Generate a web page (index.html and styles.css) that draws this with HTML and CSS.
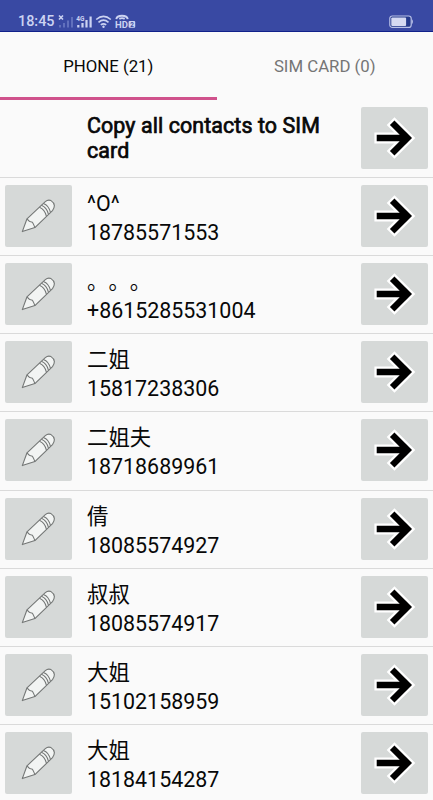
FILE: index.html
```html
<!DOCTYPE html>
<html lang="en">
<head>
    <meta charset="UTF-8">
    <meta name="viewport" content="width=device-width, initial-scale=1.0">
    <title>Contacts</title>
    <link rel="stylesheet" href="styles.css">
</head>
<body>
    <svg class="icons">
        <symbol id="pencil" viewBox="0 0 67 62">
            <path d="M17.3 46.6 L22 33.8 L40.3 16.6 Q43 14.3 46 15.6 Q49 17.4 49.4 20.6 Q49.3 23.4 47.5 25.6 L29.9 42.6 Z" fill="#f2f4f3" stroke="#747776" stroke-width="1.1" stroke-linejoin="round"/>
            <path d="M22 33.8 Q24 37 27.4 37.2 Q28.6 39 29.9 42.6 M34.4 22.2 Q39.8 24.2 41.5 31.4 M36.4 20.3 Q41.8 22.3 43.5 29.4 M38.4 18.4 Q43.8 20.3 45.5 27.5" fill="none" stroke="#747776" stroke-width="1.1"/>
        </symbol>
        <symbol id="arrow" viewBox="0 0 67 62">
            <path d="M13.4 31 H46 M29.6 14.1 L46.5 31 L29.6 47.9" fill="none" stroke="#fff" stroke-width="11"/>
            <path d="M15.7 31 H46 M31.2 15.7 L46.5 31 L31.2 46.3" fill="none" stroke="#000" stroke-width="6.4"/>
        </symbol>
    </svg>

    <div class="status">
        <span class="time">18:45</span>
        <svg class="signals" width="80" height="16" viewBox="0 0 80 16" fill="none" stroke="#ccd3f2">
            <!-- sim 1, no service -->
            <path d="M2 1.5 L6 5.5 M6 1.5 L2 5.5" stroke-width="1.6"/>
            <path d="M3 13.5 V11 M7 13.5 V9 M11 13.5 V6.5 M15 13.5 V3" stroke="#6170bd" stroke-width="2"/>
            <!-- sim 2, 4G -->
            <text x="19.2" y="6.6" font-size="6.5" font-weight="700" fill="#ccd3f2" stroke="none">4G</text>
            <path d="M21.3 13.5 V11 M25.5 13.5 V9 M29.5 13.5 V6 M33.6 13.5 V2.5" stroke-width="2.2"/>
            <!-- wifi -->
            <path d="M39.2 5.5 Q46.5 -.9 53.8 5.5 M41.5 8.3 Q46.5 3.9 51.5 8.3 M43.8 10.9 Q46.5 8.7 49.2 10.9" stroke-width="1.6"/>
            <circle cx="46.5" cy="12.8" r="1.2" fill="#ccd3f2" stroke="none"/>
            <!-- hd voice -->
            <path d="M59.3 5.2 Q59.8 1.8 65 1.8 Q70.2 1.8 70.7 5.2 M62.3 4.8 Q65 3.4 67.7 4.8" stroke-width="1.9"/>
            <text x="58" y="13.8" font-size="9.5" font-weight="700" fill="#ccd3f2" stroke="none">HD</text>
            <rect x="71.6" y="7" width="6.6" height="6.8" rx="1" fill="#ccd3f2" stroke="none"/>
            <text x="73.2" y="12.7" font-size="6.3" font-weight="700" fill="#3949a3" stroke="none">2</text>
        </svg>
        <svg class="battery" width="25" height="14" viewBox="0 0 25 14">
            <rect x=".8" y="1" width="21.4" height="11.4" rx="2.5" fill="#253a8c" stroke="#b9c1e8" stroke-width="1.2"/>
            <rect x="2.3" y="2.4" width="14.8" height="8.6" rx="1" fill="#d5daf2"/>
            <path d="M22.8 4 Q25 6.7 22.8 9.4 Z" fill="#c3caec"/>
        </svg>
    </div>

    <div class="tabs">
        <div class="tab active">PHONE (21)</div>
        <div class="tab">SIM CARD (0)</div>
    </div>

    <div class="list">
        <div class="row">
            <div class="title">Copy all contacts to SIM card</div>
            <div class="btn"><svg><use href="#arrow"/></svg></div>
        </div>
        <div class="row">
            <div class="btn"><svg><use href="#pencil"/></svg></div>
            <div class="contact"><div>^O^</div><div>18785571553</div></div>
            <div class="btn"><svg><use href="#arrow"/></svg></div>
        </div>
        <div class="row">
            <div class="btn"><svg><use href="#pencil"/></svg></div>
            <div class="contact"><div>。。。</div><div>+8615285531004</div></div>
            <div class="btn"><svg><use href="#arrow"/></svg></div>
        </div>
        <div class="row">
            <div class="btn"><svg><use href="#pencil"/></svg></div>
            <div class="contact"><div>二姐</div><div>15817238306</div></div>
            <div class="btn"><svg><use href="#arrow"/></svg></div>
        </div>
        <div class="row">
            <div class="btn"><svg><use href="#pencil"/></svg></div>
            <div class="contact"><div>二姐夫</div><div>18718689961</div></div>
            <div class="btn"><svg><use href="#arrow"/></svg></div>
        </div>
        <div class="row">
            <div class="btn"><svg><use href="#pencil"/></svg></div>
            <div class="contact"><div>倩</div><div>18085574927</div></div>
            <div class="btn"><svg><use href="#arrow"/></svg></div>
        </div>
        <div class="row">
            <div class="btn"><svg><use href="#pencil"/></svg></div>
            <div class="contact"><div>叔叔</div><div>18085574917</div></div>
            <div class="btn"><svg><use href="#arrow"/></svg></div>
        </div>
        <div class="row">
            <div class="btn"><svg><use href="#pencil"/></svg></div>
            <div class="contact"><div>大姐</div><div>15102158959</div></div>
            <div class="btn"><svg><use href="#arrow"/></svg></div>
        </div>
        <div class="row">
            <div class="btn"><svg><use href="#pencil"/></svg></div>
            <div class="contact"><div>大姐</div><div>18184154287</div></div>
            <div class="btn"><svg><use href="#arrow"/></svg></div>
        </div>
    </div>
</body>
</html>
```
FILE: styles.css
```css
* {
    box-sizing: border-box;
}

body {
    margin: 0;
    height: 800px;
    overflow: hidden;
    background-color: #fafafa;
    color: #080808;
    font-family: Roboto, "Noto Sans CJK SC", sans-serif;
}

.icons {
    display: none;
}

.status {
    display: flex;
    align-items: center;
    height: 32px;
    padding: 12px 19px 0 18px;
    background-color: #3949a3;
    border-bottom: 1px solid #10208a;
    color: #ccd3f2;
}

.time {
    width: 39px;
    padding-top: 1px;
    font-size: 14.4px;
    font-weight: 500;
    line-height: 20px;
}

.battery {
    margin-left: auto;
}

.tabs {
    display: flex;
    height: 67.6px;
}

.tab {
    flex: 1;
    border-bottom: 3px solid transparent;
    color: #757575;
    font-size: 16.8px;
    line-height: 69px;
    text-align: center;
}

.tab.active {
    border-bottom-color: #d0528c;
    color: #080808;
}

.row {
    display: flex;
    align-items: center;
    height: 78.2px;
    padding: 0 5px;
    border-bottom: 1px solid #dadada;
}

.btn {
    flex: none;
    width: 67px;
    height: 62px;
    margin-bottom: 1px;
    border-radius: 2px;
    background-color: #d6d9d8;
}

.btn svg {
    display: block;
    width: 67px;
    height: 62px;
}

.title {
    flex: 1;
    padding: 0 30px 1px 82px;
    font-size: 21.4px;
    line-height: 25px;
    letter-spacing: .1px;
    -webkit-text-stroke: .7px #080808;
}

.contact {
    flex: 1;
    padding: 3px 0 0 15px;
    font-size: 21.4px;
    line-height: 29px;
    text-spacing-trim: space-all;
}
```
